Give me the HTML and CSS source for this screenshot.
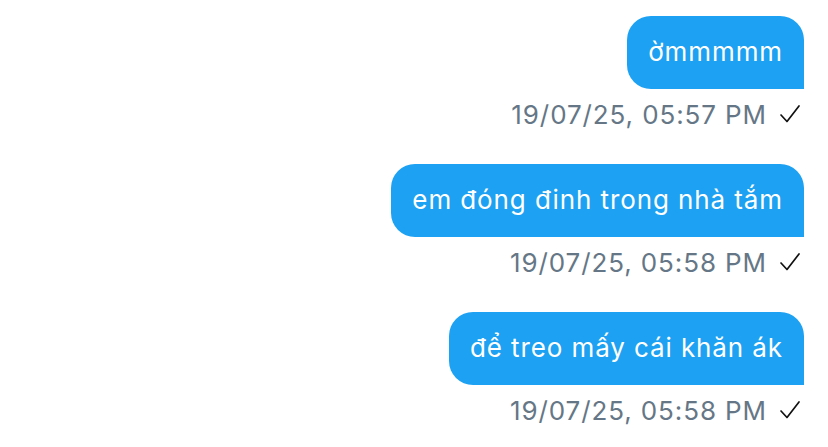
FILE: index.html
```html
<!DOCTYPE html>
<html lang="vi">
  <head>
    <meta charset="UTF-8" />
    <meta name="viewport" content="width=device-width, initial-scale=1.0" />
    <title>Tin nhắn</title>
    <link rel="stylesheet" href="styles.css">
  </head>
  <body>
    <div class="chat">
      <div class="message">
        <div class="bubble">ờmmmmm</div>
        <div class="meta">
          <span class="time">19/07/25, 05:57 PM</span>
          <svg class="tick" viewBox="0 0 22 22" width="22" height="22"><path d="M2 12 L8 18.5 L20 3" fill="none" stroke="#111" stroke-width="1.7" stroke-linecap="round" stroke-linejoin="round"/></svg>
        </div>
      </div>

      <div class="message">
        <div class="bubble">em đóng đinh trong nhà tắm</div>
        <div class="meta">
          <span class="time">19/07/25, 05:58 PM</span>
          <svg class="tick" viewBox="0 0 22 22" width="22" height="22"><path d="M2 12 L8 18.5 L20 3" fill="none" stroke="#111" stroke-width="1.7" stroke-linecap="round" stroke-linejoin="round"/></svg>
        </div>
      </div>

      <div class="message">
        <div class="bubble">để treo mấy cái khăn ák</div>
        <div class="meta">
          <span class="time">19/07/25, 05:58 PM</span>
          <svg class="tick" viewBox="0 0 22 22" width="22" height="22"><path d="M2 12 L8 18.5 L20 3" fill="none" stroke="#111" stroke-width="1.7" stroke-linecap="round" stroke-linejoin="round"/></svg>
        </div>
      </div>
    </div>
  </body>
</html>
```

FILE: styles.css
```css
* {
  margin: 0;
  padding: 0;
  box-sizing: border-box;
  font-family: Inter, 'Liberation Sans', Arial, sans-serif;
}

body {
  background-color: white;
}

.chat {
  display: flex;
  flex-direction: column;
  align-items: flex-end;
  gap: 30px;
  padding: 16px 24px 0 0;
}

.message {
  display: flex;
  flex-direction: column;
  align-items: flex-end;
}

.bubble {
  background-color: #1da1f2;
  color: white;
  font-size: 26px;
  line-height: 30px;
  letter-spacing: 0.9px;
  padding: 21px 21px 22px;
  border-radius: 24px 24px 0 24px;
}

.meta {
  display: flex;
  align-items: center;
  gap: 12px;
  margin-top: 5px;
  padding-right: 3px;
  height: 40px;
}

.time {
  color: #657786;
  font-size: 26px;
  letter-spacing: 0.9px;
}

.tick {
  display: block;
}
```
